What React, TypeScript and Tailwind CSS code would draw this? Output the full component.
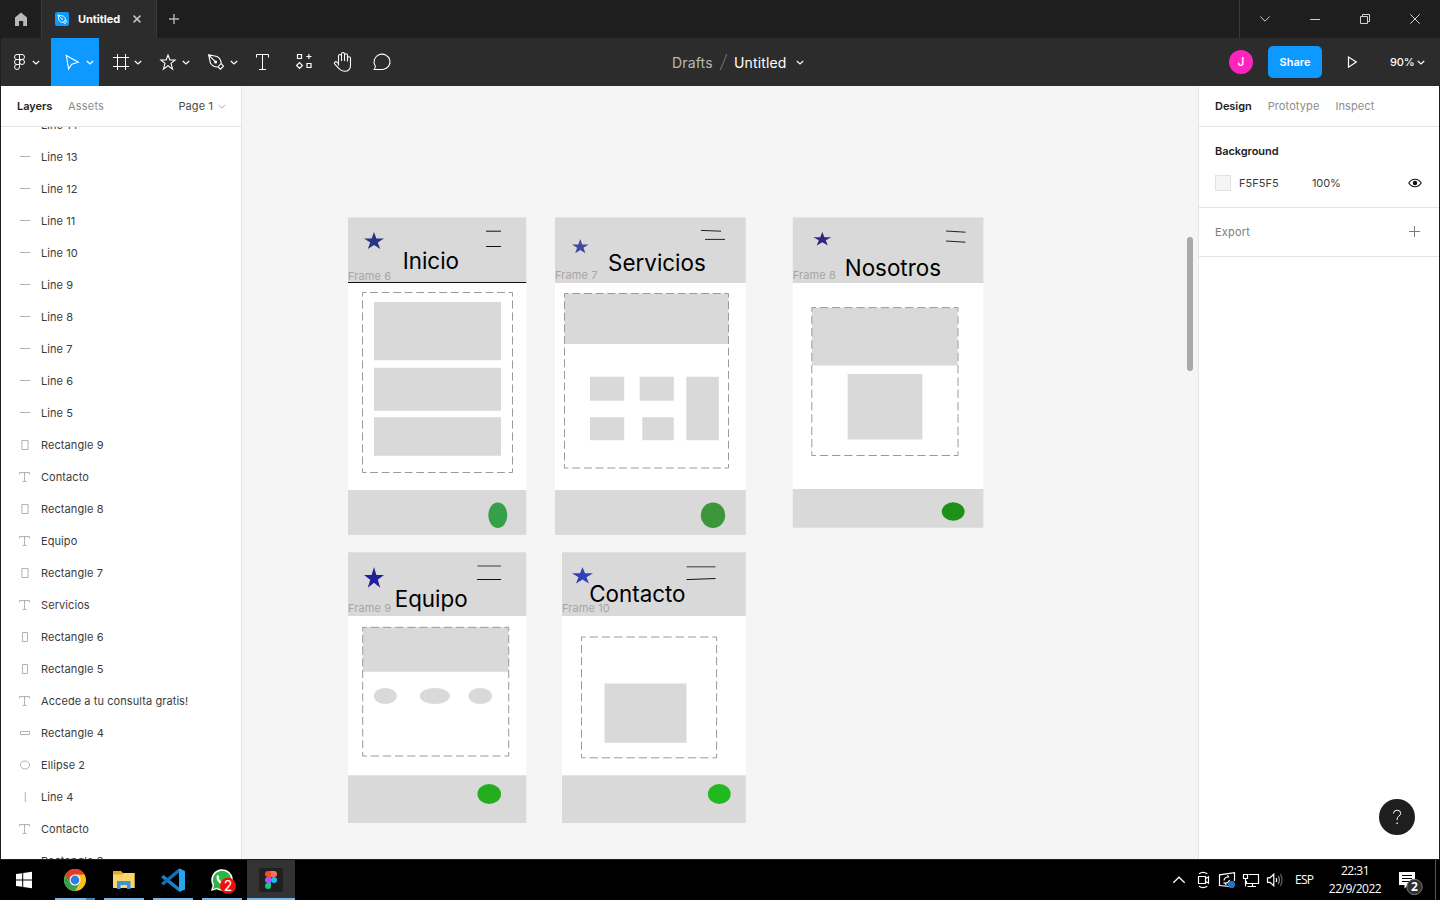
import type { ReactNode } from "react";

type Box = [number, number, number, number];

function Ico({ box, color = "#fff", sw = 1, children }: { box: Box; color?: string; sw?: number; children: ReactNode }) {
  return (
    <svg className="shrink-0" width={box[2]} height={box[3]} viewBox={box.join(" ")} fill="none" stroke={color} strokeWidth={sw}>
      {children}
    </svg>
  );
}

function TitleBar() {
  return (
    <header className="flex h-[38px] shrink-0 bg-[#1e1e1e]">
      <Ico box={[1, 0, 40, 38]}>
        <path d="M15 17.4 21 12.4 27 17.4V26H23.2V21H19V26H15Z" fill="#b8b8b8" stroke="none" />
      </Ico>
      <div className="flex w-[116px] items-center border-x border-[#3a3a3a] bg-[#2c2c2c] pl-[13px]">
        <Ico box={[55, 12, 14, 14]}>
          <rect x="55" y="12" width="14" height="14" rx="2" fill="#0d99ff" stroke="none" />
          <path d="M58 15 63.5 16.2C65 17 65.6 18.2 65.4 20L63.3 22.2C61 22.4 59.6 21.6 59 20.4ZM58 15 61.6 18.6M65.9 20.4 63.7 22.7 64.8 23.7 67 21.5Z" strokeWidth=".9" />
          <circle cx="62" cy="18.9" r=".8" fill="#fff" stroke="none" />
        </Ico>
        <span className="ml-[9px] w-[55px] text-[11px] font-bold tracking-[-0.05px] text-white">Untitled</span>
        <Ico box={[133, 15, 9, 9]} color="#c4c4c4" sw={1.5}>
          <path d="M133.6 15.6 140.4 22.4M140.4 15.6 133.6 22.4" />
        </Ico>
      </div>
      <Ico box={[157, 0, 34, 38]} color="#b5b5b5" sw={1.4}>
        <path d="M169 19H179M174 14V24" />
      </Ico>
      <div className="ml-auto flex border-l border-[#3a3a3a]">
        <Ico box={[1240, 0, 200, 38]} color="#d0d0d0">
          <path d="M1260.3 16.5 1265 21.2 1269.7 16.5M1310 19.5H1320M1360.5 16.5H1367.5V23.5H1360.5ZM1362.5 16.5V14.5H1369.5V21.5H1367.5M1410.3 14.3 1419.7 23.7M1419.7 14.3 1410.3 23.7" />
        </Ico>
      </div>
    </header>
  );
}

function Toolbar() {
  return (
    <div className="flex h-12 shrink-0 bg-[#2c2c2c]">
      <div className="flex w-[671px] shrink-0">
        <Ico box={[1, 38, 50, 48]}>
          <path d="M19.5 54.5H17A2.5 2.5 0 0 0 17 59.5H19.5ZM19.5 54.5H22A2.5 2.5 0 0 1 22 59.5H19.5M19.5 59.5H17A2.5 2.5 0 0 0 17 64.5H19.5ZM19.5 64.5H17A2.5 2.5 0 1 0 19.5 67Z" />
          <circle cx="22" cy="62" r="2.5" />
          <path d="M32.8 61 36 64 39.2 61" strokeWidth="1.2" />
        </Ico>
        <div className="bg-[#0d99ff]">
          <Ico box={[51, 38, 48, 48]}>
            <path d="M66.3 55.5 78.3 62.2 71.8 64.3 68.6 69Z" strokeWidth="1.1" />
            <path d="M86.8 61 90 64 93.2 61" strokeWidth="1.2" />
          </Ico>
        </div>
        <Ico box={[99, 38, 48, 48]}>
          <path d="M117.5 54V70M125.5 54V70M113 57.5H129M113 66.5H129" />
          <path d="M134.8 61 138 64 141.2 61" strokeWidth="1.2" />
        </Ico>
        <Ico box={[147, 38, 48, 48]}>
          <path d="M168 55 169.9 60H175.1L171 63.4 172.6 69.1 168 65.8 163.4 69.1 165 63.4 160.9 60H166.1Z" strokeWidth="1.1" />
          <path d="M182.8 61 186 64 189.2 61" strokeWidth="1.2" />
        </Ico>
        <Ico box={[195, 38, 48, 48]}>
          <path d="M208.6 54.8 217 56.5Q220.8 58.3 221.2 63.3L217.8 67Q212.6 67 210.4 63ZM208.6 54.8 215 61.3M221.4 63.8 223.5 66.2 220.5 69.2 218 67" strokeWidth="1.1" />
          <circle cx="215.6" cy="61.9" r="1.5" fill="#fff" stroke="none" />
          <path d="M230.8 61 234 64 237.2 61" strokeWidth="1.2" />
        </Ico>
        <Ico box={[243, 38, 40, 48]}>
          <path d="M256.5 57.5V54.5H268.5V57.5M262.5 54.5V69.5M259 69.5H266" />
        </Ico>
        <Ico box={[283, 38, 40, 48]} sw={1.2}>
          <path d="M297.5 54.5H301.5V58.5H297.5ZM307 63.5H311V67.5H307ZM308.9 54V59M306.3 56.5H311.5M299.5 62.6 302.4 65.5 299.5 68.4 296.6 65.5Z" />
        </Ico>
        <Ico box={[323, 38, 40, 48]} sw={1.1}>
          <path d="M338.5 65.5V56A1.5 1.5 0 0 1 341.5 56V61M341.5 61V54A1.5 1.5 0 0 1 344.5 54V61M344.5 60V55.3A1.5 1.5 0 0 1 347.5 55.3V61.5M347.5 61V58.3A1.5 1.5 0 0 1 350.5 58.3V65Q350.5 71.3 344.5 71.3 341.5 71.3 339.5 69L334.8 64.2A1.4 1.4 0 0 1 336.9 62.2L338.5 63.5" />
        </Ico>
        <Ico box={[363, 38, 40, 48]} sw={1.1}>
          <path d="M374.2 69.5Q375.7 67.5 375.3 66A8 7.7 0 1 1 382.5 69.5Z" />
        </Ico>
      </div>
      <div className="flex items-center text-[14px] tracking-[0.15px] text-white">
        <span className="w-[42px] whitespace-nowrap text-[#b8b8b8]">Drafts</span>
        <Ico box={[714, 38, 20, 48]} color="#686868" sw={1.2}>
          <path d="M720.3 70 726.8 54" />
        </Ico>
        <span className="w-[53px] whitespace-nowrap">Untitled</span>
        <Ico box={[787, 38, 21, 48]} sw={1.2}>
          <path d="M796.8 61 800 64 803.2 61" />
        </Ico>
      </div>
      <div className="flex flex-1 items-center justify-end text-[11px] font-medium text-white">
        <span className="grid size-6 place-items-center rounded-full bg-[#ff24bd] text-[12px]">J</span>
        <button className="ml-[15px] h-8 w-[54px] rounded-[5px] bg-[#0d99ff] font-semibold">Share</button>
        <Ico box={[1322, 38, 68, 48]} sw={1.2}>
          <path d="M1348.5 57V67.2L1356.3 62.1Z" />
        </Ico>
        <span className="w-[22px] tracking-[-0.2px] whitespace-nowrap">90%</span>
        <Ico box={[1412, 38, 28, 48]} sw={1.2}>
          <path d="M1417.8 61 1421 64 1424.2 61" />
        </Ico>
      </div>
    </div>
  );
}

type Kind = "line" | "vline" | "rect" | "thin" | "wide" | "text" | "oval";

const kindPath: Record<Kind, string> = {
  line: "M3 7.5H13",
  vline: "M8.3 3V13",
  rect: "M4.9 3.5H11.1V12.5H4.9Z",
  thin: "M5.5 3.5H10.5V12.5H5.5Z",
  wide: "M3.5 6.5H12.5V9.5H3.5Z",
  text: "M2.5 5.5V3.5H12.5V5.5M7.5 3.5V12.5M5.5 12.5H9.5",
  oval: "M8 4A4.6 4 0 1 1 8 12A4.6 4 0 1 1 8 4Z",
};

const layers: [string, Kind][] = [
  ["Line 14", "line"],
  ["Line 13", "line"],
  ["Line 12", "line"],
  ["Line 11", "line"],
  ["Line 10", "line"],
  ["Line 9", "line"],
  ["Line 8", "line"],
  ["Line 7", "line"],
  ["Line 6", "line"],
  ["Line 5", "line"],
  ["Rectangle 9", "rect"],
  ["Contacto", "text"],
  ["Rectangle 8", "rect"],
  ["Equipo", "text"],
  ["Rectangle 7", "rect"],
  ["Servicios", "text"],
  ["Rectangle 6", "thin"],
  ["Rectangle 5", "thin"],
  ["Accede a tu consulta gratis!", "text"],
  ["Rectangle 4", "wide"],
  ["Ellipse 2", "oval"],
  ["Line 4", "vline"],
  ["Contacto", "text"],
  ["Rectangle 3", "wide"],
];

function LayersPanel() {
  return (
    <aside className="flex w-[241px] shrink-0 flex-col border-r border-[#e5e5e5] bg-white text-[11px]">
      <div className="flex h-[41px] shrink-0 items-center border-b border-[#e5e5e5] pl-4">
        <span className="w-[51px] font-semibold tracking-[-0.05px] text-[#222]">Layers</span>
        <span className="tracking-[0.2px] text-[#8c8c8c]">Assets</span>
        <span className="ml-auto tracking-[0.1px] text-[#4a4a4a]">Page 1</span>
        <Ico box={[212, 96, 28, 20]} color="#b3b3b3">
          <path d="M217.8 105 221 108 224.2 105" />
        </Ico>
      </div>
      <div className="min-h-0 flex-1 overflow-hidden">
        <ul className="-mt-[18px]">
          {layers.map(([name, kind], i) => (
            <li key={i} className="flex h-8 items-center gap-2 pl-4 tracking-[0.08px] text-[#3c3c3c]">
              <Ico box={[0, 0, 16, 16]} color="#b3b3b3">
                <path d={kindPath[kind]} />
              </Ico>
              {name}
            </li>
          ))}
        </ul>
      </div>
    </aside>
  );
}

function DashBox({ x, y, r, b }: { x: number; y: number; r: number; b: number }) {
  const edge = (x1: number, y1: number, x2: number, y2: number) => {
    const len = x2 - x1 + (y2 - y1);
    const period = len / Math.round(len / 12);
    const dash = period * 0.68;
    return <line x1={x1} y1={y1} x2={x2} y2={y2} strokeDasharray={`${dash} ${period - dash}`} strokeDashoffset={dash / 2} />;
  };
  return (
    <g stroke="#9a9a9a" strokeWidth="1">
      {edge(x, y, r, y)}
      {edge(x, b, r, b)}
      {edge(x, y, x, b)}
      {edge(r, y, r, b)}
    </g>
  );
}

const starUnit = [
  [50, 0], [61.8, 38.2], [100, 38.2], [69.1, 61.8], [80.9, 100], [50, 76.4], [19.1, 100], [30.9, 61.8], [0, 38.2], [38.2, 38.2],
];

function Star({ x, y, w, h, fill }: { x: number; y: number; w: number; h: number; fill: string }) {
  return <polygon fill={fill} points={starUnit.map(([a, b]) => `${x + (a * w) / 100},${y + (b * h) / 100}`).join(" ")} />;
}

interface FrameProps {
  name: string;
  box: Box;
  head: number;
  foot: number;
  labelY: number;
  title: string;
  tx: number;
  ty: number;
  place: string;
  children: ReactNode;
}

function Frame({ name, box, head, foot, labelY, title, tx, ty, place, children }: FrameProps) {
  const [x, y, w, h] = box;
  const left = Math.floor(x);
  const top = Math.floor(y);
  const vw = Math.ceil(x + w) - left;
  const vh = Math.ceil(y + h) - top;
  return (
    <svg className={`absolute ${place}`} width={vw} height={vh} viewBox={`${left} ${top} ${vw} ${vh}`}>
      <rect x={x} y={y} width={w} height={h} fill="#fff" />
      <rect x={x} y={y} width={w} height={head - y} fill="#d9d9d9" />
      <rect x={x} y={foot} width={w} height={y + h - foot} fill="#d9d9d9" />
      <text x={x} y={labelY} fontSize="11" fill="#a6a6a6" letterSpacing=".1">{name}</text>
      {children}
      <text x={tx} y={ty} fontSize="22.4" fill="#000">{title}</text>
    </svg>
  );
}

function Canvas() {
  return (
    <main className="relative min-w-0 flex-1 overflow-hidden bg-[#f5f5f5]">
      <Frame name="Frame 6" box={[348, 217.3, 178.3, 317.6]} head={283} foot={490} labelY={280} title="Inicio" tx={402.7} ty={268.8} place="left-[106px] top-[131px]">
        <Star x={364} y={232} w={20} h={17} fill="#2b3480" />
        <path d="M486 231.2H501M486 246.5H501M348 282.5H526.3" stroke="#111" />
        <DashBox x={362.5} y={292.5} r={512.5} b={472.5} />
        <path d="M374 302H501V360.3H374ZM374 367.8H501V410.8H374ZM374 417.2H501V455.8H374Z" fill="#d9d9d9" />
        <ellipse cx="497.8" cy="515.2" rx="9.5" ry="12.7" fill="#35a047" />
      </Frame>
      <Frame name="Frame 7" box={[555, 217.3, 190.8, 317.6]} head={283} foot={490} labelY={279} title="Servicios" tx={608.1} ty={270.5} place="left-[313px] top-[131px]">
        <Star x={572} y={239} w={16.6} h={14.3} fill="#3f4a9c" />
        <path d="M701 230.4 721 231.2M705 239.4H725" stroke="#222" />
        <path d="M564.5 293.5H728.5V344H564.5ZM590 376.8H624.2V400.8H590ZM639.7 376.8H673.8V400.8H639.7ZM686.3 376.8H718.8V440.3H686.3ZM590 417.2H624.2V440.3H590ZM642.3 417.2H673.8V440.3H642.3Z" fill="#d9d9d9" />
        <DashBox x={564.5} y={293.5} r={728.5} b={468} />
        <ellipse cx="713" cy="515.2" rx="12.2" ry="12.7" fill="#3c963a" />
      </Frame>
      <Frame name="Frame 8" box={[792.7, 217.3, 190.8, 310.5]} head={283} foot={489} labelY={279} title="Nosotros" tx={844.8} ty={275.9} place="left-[550px] top-[131px]">
        <Star x={813.3} y={232} w={18} h={13.5} fill="#35237f" />
        <path d="M946 231 965.5 232.2M946 241 965.5 242.2" stroke="#222" />
        <path d="M812 307.8H957.6V365.6H812ZM847.6 374H922.3V439.6H847.6Z" fill="#d9d9d9" />
        <DashBox x={811.8} y={307.6} r={958} b={455.5} />
        <ellipse cx="953.2" cy="511.5" rx="11.4" ry="9.2" fill="#1c9117" />
      </Frame>
      <Frame name="Frame 9" box={[348, 552.2, 178.3, 270.8]} head={616} foot={775.3} labelY={612} title="Equipo" tx={394.7} ty={607.2} place="left-[106px] top-[466px]">
        <Star x={364} y={567} w={20} h={20.7} fill="#21219c" />
        <path d="M477.5 566H501" stroke="#555" strokeWidth="1.2" />
        <path d="M477 579.5H501" stroke="#111" />
        <path d="M362.7 627.3H508.5V671.7H362.7Z" fill="#d9d9d9" />
        <DashBox x={362.7} y={627.3} r={508.7} b={756} />
        <g fill="#d9d9d9">
          <ellipse cx="385.3" cy="696" rx="11.4" ry="8.1" />
          <ellipse cx="434.9" cy="696" rx="15" ry="8.1" />
          <ellipse cx="480.3" cy="696" rx="11.7" ry="8.1" />
        </g>
        <ellipse cx="489.2" cy="794" rx="11.8" ry="10" fill="#24ae1f" />
      </Frame>
      <Frame name="Frame 10" box={[562, 552.2, 183.8, 270.8]} head={616} foot={775.3} labelY={612} title="Contacto" tx={589.2} ty={601.7} place="left-[320px] top-[466px]">
        <Star x={572} y={567} w={21} h={16.5} fill="#3140b8" />
        <path d="M686.5 566.8H715.5" stroke="#555" strokeWidth="1.2" />
        <path d="M686.5 579.6 715.5 578.5" stroke="#111" />
        <path d="M604.5 683.5H686.5V742.7H604.5Z" fill="#d9d9d9" />
        <DashBox x={581.5} y={637} r={716.6} b={757.8} />
        <ellipse cx="719.3" cy="794" rx="11.4" ry="10" fill="#22b81f" />
      </Frame>
      <div className="absolute top-[151px] right-[5px] h-[134px] w-[6px] rounded-full bg-[#a9a9a9]" />
    </main>
  );
}

function DesignPanel() {
  return (
    <aside className="flex w-[241px] shrink-0 flex-col border-l border-[#e5e5e5] bg-white text-[11px] tracking-[0.1px]">
      <div className="flex h-[41px] items-center gap-4 border-b border-[#e5e5e5] pl-4 text-[#8c8c8c]">
        <span className="font-semibold tracking-[-0.05px] text-[#1e1e1e]">Design</span>
        <span className="tracking-[0.1px]">Prototype</span>
        <span className="tracking-[0.1px]">Inspect</span>
      </div>
      <div className="flex h-[81px] flex-col border-b border-[#e5e5e5] pt-2 pr-[17px] pl-4">
        <div className="flex h-8 items-center font-semibold tracking-[-0.05px] text-[#1e1e1e]">Background</div>
        <div className="flex h-8 items-center text-[#3c3c3c]">
          <span className="size-4 border border-[#e2e2e2] bg-[#f5f5f5]" />
          <span className="ml-2 w-[73px] tracking-[0.05px]">F5F5F5</span>
          <span className="tracking-[-0.1px]">100%</span>
          <span className="ml-auto">
            <Ico box={[1408, 176, 14, 14]} color="#111" sw={1.1}>
              <path d="M1408.8 183Q1411 179.3 1415 179.3T1421.2 183Q1419 186.7 1415 186.7T1408.8 183Z" />
              <circle cx="1415" cy="183" r="2.2" fill="#111" stroke="none" />
            </Ico>
          </span>
        </div>
      </div>
      <div className="flex h-[49px] items-center justify-between border-b border-[#e5e5e5] pr-[18px] pl-4 text-[#7d7d7d]">
        <span className="tracking-[0.2px]">Export</span>
        <Ico box={[1409, 226, 12, 12]} color="#7d7d7d">
          <path d="M1409 231.5H1420M1414.5 226V237" />
        </Ico>
      </div>
      <button className="mt-auto mr-6 mb-6 grid size-9 place-items-center self-end rounded-full bg-[#1e1e1e]">
        <Ico box={[1389, 809, 16, 16]}>
          <path d="M1393.5 813.5Q1393.5 810.2 1397.1 810.2T1400.7 813.4Q1400.7 815 1398.8 816.2 1397.1 817.3 1397.1 819V820" />
          <path d="M1397.1 822.5V824" strokeWidth="1.3" />
        </Ico>
      </button>
    </aside>
  );
}

function Task({ children, className = "", bar = "w-10" }: { children: ReactNode; className?: string; bar?: string }) {
  return (
    <div className={`flex h-10 w-12 flex-col items-center ${className}`}>
      <div className="h-[38px]">{children}</div>
      <div className={`h-0.5 bg-[#76b9ed] ${bar}`} />
    </div>
  );
}

function Taskbar() {
  return (
    <footer className="flex h-10 shrink-0 bg-black">
      <Ico box={[0, 860, 51, 40]}>
        <path d="M16 874.1 22.2 873.2V879.4H16ZM23.2 873.1 32 871.8V879.4H23.2ZM16 880.4H22.2V886.8L16 885.9ZM23.2 880.4H32V888.2L23.2 886.9Z" fill="#fff" stroke="none" />
      </Ico>
      <div className="flex gap-px">
        <Task bar="w-10 border-r-[9px] border-[#4f7fa8]">
          <Ico box={[51, 860, 48, 38]}>
            <g stroke="none">
              <circle cx="75" cy="880" r="11" fill="#fbc116" />
              <path d="M75 880 65.5 874.5A11 11 0 0 0 75 891L79.8 882.7Z" fill="#31a350" />
              <path d="M75 874.5H84.5A11 11 0 0 0 65.5 874.5L70.3 882.7Z" fill="#e23b2e" />
              <circle cx="75" cy="880" r="5.5" fill="#fff" />
              <circle cx="75" cy="880" r="4.4" fill="#2f7de1" />
            </g>
          </Ico>
        </Task>
        <Task>
          <Ico box={[100, 860, 48, 38]}>
            <g stroke="none">
              <path d="M113 871H121L123 873H134.5V888H113Z" fill="#e9a91f" />
              <path d="M113 874.5H122L124 873H134.5V888H113Z" fill="#fbd668" />
              <path d="M117 881H130.5V889H127V885H120.5V889H117Z" fill="#3e93dd" />
            </g>
          </Ico>
        </Task>
        <Task>
          <Ico box={[149, 860, 48, 38]}>
            <path d="M162.3 876.2 179.5 890" stroke="#1783cc" strokeWidth="3.4" />
            <path d="M162.3 884.3 179.5 870" stroke="#0f72b8" strokeWidth="3.4" />
            <path d="M179 868.2 185 871V889.5L179 892Z" fill="#27a4ee" stroke="none" />
          </Ico>
        </Task>
        <Task>
          <Ico box={[198, 860, 48, 38]}>
            <path d="M211 891 212.6 885.2A10.8 10.8 0 1 1 216.6 889.3Z" fill="#fff" stroke="none" />
            <path d="M213 889 214.2 884.8A9.2 9.2 0 1 1 217 887.7Z" fill="#2bb741" stroke="none" />
            <path d="M218.6 875.6Q217 877 218.2 879.6 220.7 884 225 884.8" strokeWidth="2.4" />
            <circle cx="228" cy="885.8" r="8" fill="#f20d0d" stroke="none" />
            <text x="228" y="891" textAnchor="middle" fontSize="14" fill="#fff" stroke="none">2</text>
          </Ico>
        </Task>
        <Task className="bg-[#333]" bar="w-12">
          <Ico box={[247, 860, 48, 38]}>
            <g stroke="none">
              <rect x="259" y="868" width="24" height="24" rx="1.5" fill="#202020" />
              <path d="M271 871H268A3 3 0 0 0 268 877H271Z" fill="#f24e1e" />
              <path d="M271 871H274A3 3 0 0 1 274 877H271Z" fill="#ff7262" />
              <path d="M271 877H268A3 3 0 0 0 268 883H271Z" fill="#a259ff" />
              <circle cx="274" cy="880" r="3" fill="#1abcfe" />
              <path d="M271 883H268A3 3 0 1 0 271 886Z" fill="#0acf83" />
            </g>
          </Ico>
        </Task>
      </div>
      <div className="ml-auto flex items-center font-['Open_Sans','Noto_Sans',sans-serif] text-[12px] text-white">
        <Ico box={[1165, 860, 130, 40]} sw={1.2}>
          <path d="M1173.3 882.8 1179 877.2 1184.7 882.8" />
          <path d="M1198.5 876.5H1205.5V883.5H1198.5ZM1205.5 878.7 1208.5 876.8V883.2L1205.5 881.3M1199 873.8Q1203 871 1207.3 873.8M1199 886.3Q1203 889 1207.3 886.3" />
          <path d="M1230 886.5 1219.5 885.5V874.8L1234.5 872.7V881M1224 880.5Q1224.3 877 1228.5 877L1227.5 875.3M1229.5 879.8Q1229 883 1225 883L1226.2 885M1223.5 882.8 1225 883" />
          <circle cx="1231.5" cy="884.4" r="3.6" fill="#2573c4" stroke="none" />
          <path d="M1248.5 874.5H1258.5V883.5H1246.5V881M1252.5 883.5V886.5M1247.5 886.5H1256M1243.5 874.5H1247.5V878.5H1243.5ZM1245.5 878.5V886.5" />
          <path d="M1267.5 877.8H1270L1273.8 874.2V885.8L1270 882.3H1267.5ZM1276 878Q1277.3 880 1276 882" />
          <path d="M1278.2 876Q1280.6 880 1278.2 884" stroke="#999" />
          <path d="M1280.3 874Q1283.8 880 1280.3 886" stroke="#666" />
        </Ico>
        <span className="w-[31px] tracking-[-0.75px]">ESP</span>
        <div className="flex w-[58px] flex-col items-center text-[12px] leading-[18px] tracking-[-0.5px]">
          <span>22:31</span>
          <span>22/9/2022</span>
        </div>
        <Ico box={[1384, 860, 56, 40]}>
          <path d="M1399 872H1415V885H1408L1404.5 888.5V885H1399Z" fill="#fff" stroke="none" />
          <path d="M1402 875.5H1412M1402 878.5H1412M1402 881.5H1409" stroke="#000" />
          <circle cx="1414.5" cy="887" r="7.7" fill="#303030" stroke="#777" />
          <text x="1414.5" y="891.2" textAnchor="middle" fontSize="12" fontWeight="700" fill="#fff" stroke="none">2</text>
          <path d="M1435.5 860V900" stroke="#555" />
        </Ico>
      </div>
    </footer>
  );
}

export default function App() {
  return (
    <div className="flex h-[900px] w-[1440px] flex-col overflow-hidden bg-black font-['Inter','Liberation_Sans',sans-serif]">
      <div className="flex min-h-0 flex-1 flex-col border-b border-l border-[#1e1e1e]">
        <TitleBar />
        <Toolbar />
        <div className="flex min-h-0 flex-1 border-r border-[#1e1e1e]">
          <LayersPanel />
          <Canvas />
          <DesignPanel />
        </div>
      </div>
      <Taskbar />
    </div>
  );
}
